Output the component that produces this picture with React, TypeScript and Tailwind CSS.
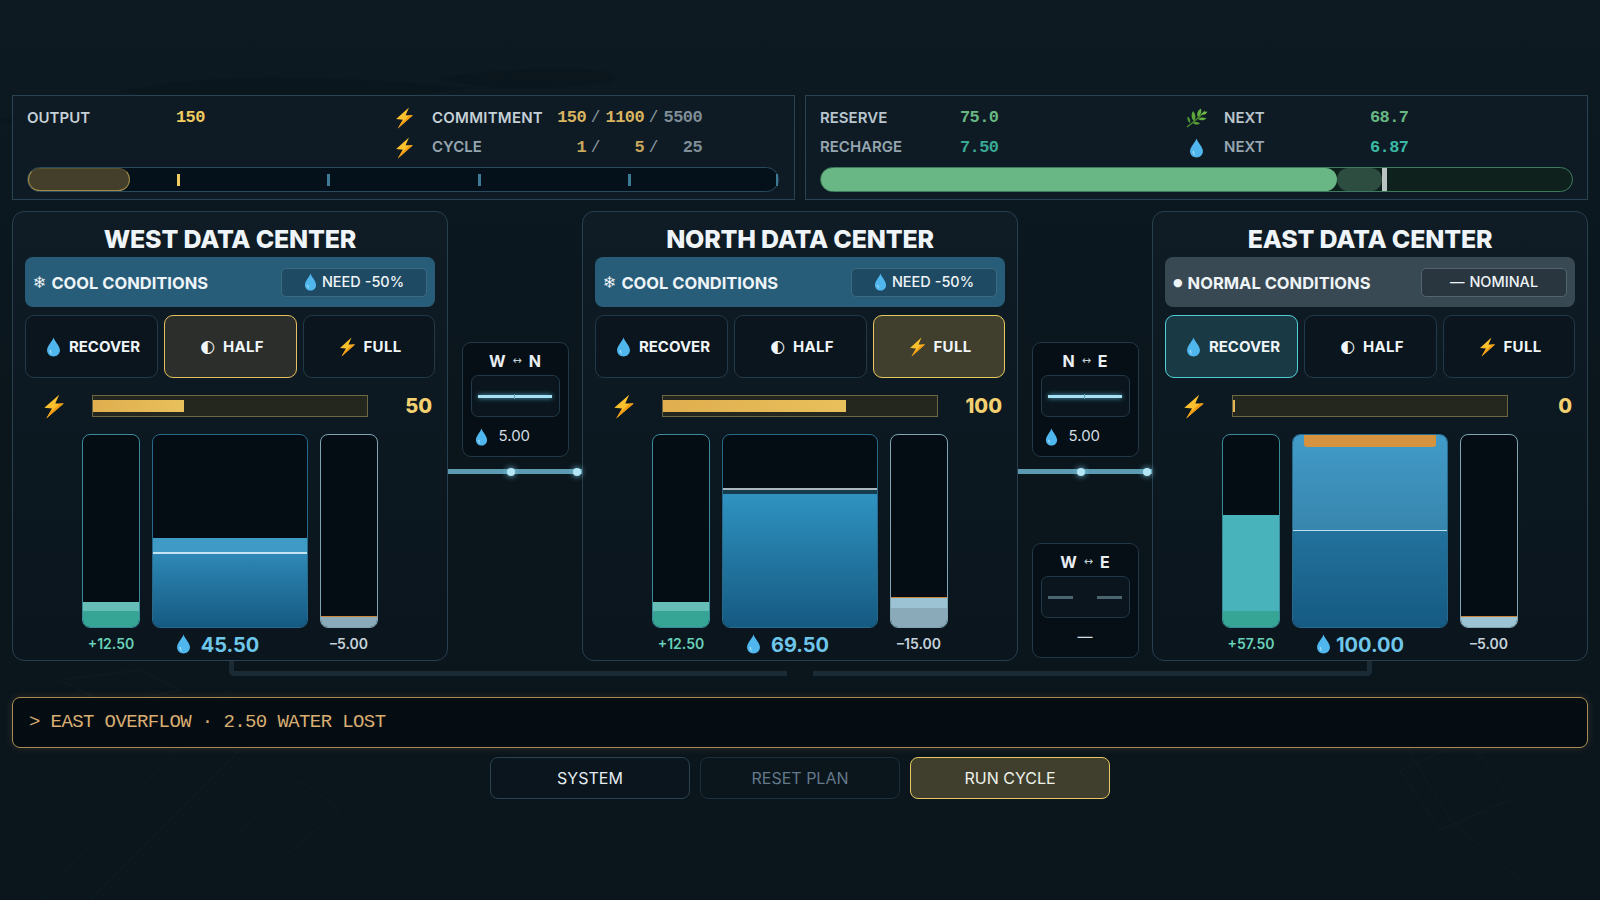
import React from "react";

const Bolt = ({ className = "w-[19px] h-[22px]" }: { className?: string }) => (
  <svg viewBox="0 0 17 20" className={className} preserveAspectRatio="none">
    <path d="M12.5 0.5 L1 11 L7 11.5 L2.5 19.5 L16 7.5 L9.5 7.5 Z" fill="#fbc02d" />
    <path d="M7 11.5 L2.5 19.5 L16 7.5 L13 7.5 L6.5 14 Z" fill="#f39c12" />
  </svg>
);

const Drop = ({ className = "w-[15px] h-[20px]" }: { className?: string }) => (
  <svg viewBox="0 0 14 19" className={className} preserveAspectRatio="none">
    <path d="M7 0.5 C6 4 1 8.5 1 12.6 C1 16 3.7 18.5 7 18.5 C10.3 18.5 13 16 13 12.6 C13 8.5 8 4 7 0.5 Z" fill="#4fb6ee" />
    <path d="M3.4 12.6 C3.4 14.6 4.4 15.9 5.8 16.3 C4.9 15.3 4.6 14 4.8 12.4 Z" fill="#a9e0fb" />
  </svg>
);

const Leaf = () => (
  <svg viewBox="0 0 22 20" className="w-[22px] h-[20px]">
    <path d="M1 19 C6 15 12 11 19 3" stroke="#4e8f2f" strokeWidth="1.2" fill="none" />
    <path d="M8 13 C5 11 5 6 7 3 C10 6 10 10 8 13 Z" fill="#5aa63a" />
    <path d="M12 9 C10 6 12 2 15 0.5 C16 4 15 7 12 9 Z" fill="#62ae40" />
    <path d="M15 6.5 C16 4.5 19 3.5 21.5 3.5 C20.5 6 18 7.5 15 6.5 Z" fill="#72bd4b" />
    <path d="M12 11 C14 9 18 9 20.5 10.5 C18 12.5 15 13 12 11 Z" fill="#62ae40" />
    <path d="M7 15 C9 13.5 12 14 14 15.5 C12 17 9 17 7 15 Z" fill="#5aa63a" />
    <path d="M4 15 C2 14 1 11 1.5 8.5 C4 10 5 12.5 4 15 Z" fill="#4e9a34" />
  </svg>
);

const Glyph = ({ children, className = "" }: { children: React.ReactNode; className?: string }) => (
  <span className={"font-['DejaVu_Sans',sans-serif] " + className}>{children}</span>
);

const Num = ({ children, className = "" }: { children: React.ReactNode; className?: string }) => (
  <span className={"font-['Liberation_Mono',monospace] font-bold text-[17px] tracking-[-0.6px] " + className}>{children}</span>
);

const Slash = () => (
  <span className="w-[19px] text-center font-['Liberation_Mono',monospace] text-[16px] font-normal text-[#8b98a1]">/</span>
);

interface Center {
  name: string;
  cond: "cool" | "normal";
  mode: "recover" | "half" | "full";
  power: number;
  powerPct: string;
  leftLight: number;
  leftColor: string;
  leftLabel: string;
  main: React.ReactNode;
  mainLabel: string;
  right: number;
  rightLight: number;
  rightLabel: string;
}

const MainWest = () => (
  <div className="flex h-full flex-col justify-end">
    <div className="h-[14px] bg-[#409ac6]" />
    <div className="h-[2px] bg-[#c4e4f2]" />
    <div className="h-[73px] bg-gradient-to-b from-[#2e88b6] to-[#155a82]" />
  </div>
);

const MainNorth = () => (
  <div className="flex h-full flex-col justify-end">
    <div className="h-[2px] bg-[#a9b8be]" />
    <div className="h-[4px] bg-[#173c4e]" />
    <div className="h-[133px] bg-gradient-to-b from-[#2f93c1] to-[#155a82]" />
  </div>
);

const MainEast = () => (
  <div className="relative flex h-full flex-col justify-end">
    <div className="absolute left-[11px] right-[11px] top-0 h-[12px] rounded-b-[3px] bg-[#d5933f]" />
    <div className="h-[95px] bg-gradient-to-b from-[#419bc8] to-[#3886ae]" />
    <div className="h-[1px] bg-[#bfe0ee]" />
    <div className="flex-1 bg-gradient-to-b from-[#22729d] to-[#155a82]" />
  </div>
);

const centers: Center[] = [
  {
    name: "WEST DATA CENTER",
    cond: "cool",
    mode: "half",
    power: 50,
    powerPct: "33.3%",
    leftLight: 9,
    leftColor: "bg-[#66bfb7]",
    leftLabel: "+12.50",
    main: <MainWest />,
    mainLabel: "45.50",
    right: 11,
    rightLight: 0,
    rightLabel: "–5.00",
  },
  {
    name: "NORTH DATA CENTER",
    cond: "cool",
    mode: "full",
    power: 100,
    powerPct: "66.7%",
    leftLight: 9,
    leftColor: "bg-[#66bfb7]",
    leftLabel: "+12.50",
    main: <MainNorth />,
    mainLabel: "69.50",
    right: 30,
    rightLight: 10,
    rightLabel: "–15.00",
  },
  {
    name: "EAST DATA CENTER",
    cond: "normal",
    mode: "recover",
    power: 0,
    powerPct: "0.8%",
    leftLight: 96,
    leftColor: "bg-[#49b3bb]",
    leftLabel: "+57.50",
    main: <MainEast />,
    mainLabel: "100.00",
    right: 11,
    rightLight: 10,
    rightLabel: "–5.00",
  },
];

const modeBase = "flex h-[63px] flex-1 items-center justify-center gap-[8px] rounded-[9px] border text-[15px] font-bold text-[#f0f5f8]";

const ModeButtons = ({ mode }: { mode: Center["mode"] }) => (
  <div className="mt-[8px] flex gap-[6px]">
    <div className={modeBase + " pl-[3px] pt-[1px]" + (mode === "recover" ? " border-[#4fd0d8] bg-[#193a45]" : " border-[#233949] bg-[#0a151d]")}>
      <Drop className="w-[15px] h-[20px]" />
      <span>RECOVER</span>
    </div>
    <div className={modeBase + " pl-[3px] pt-[1px]" + (mode === "half" ? " border-[#e6c05c] bg-[#2b2e2a]" : " border-[#233949] bg-[#0a151d]")}>
      <Glyph className="text-[17px] font-normal">◐</Glyph>
      <span className="tracking-[0.3px]">HALF</span>
    </div>
    <div className={modeBase + " pl-[2px] pt-[1px]" + (mode === "full" ? " border-[#e8c860] bg-[#403f2e]" : " border-[#233949] bg-[#0a151d]")}>
      <Bolt className="w-[17px] h-[20px]" />
      <span className="tracking-[0.3px]">FULL</span>
    </div>
  </div>
);

const CenterPanel = ({ c }: { c: Center }) => (
  <div className="h-[450px] rounded-[12px] border border-[#293f4e] bg-gradient-to-b from-[#0f1c25] to-[#0a151d] px-[12px]">
    <div className="flex h-[45px] items-center justify-center pt-[10px] text-[25px] font-extrabold tracking-[-0.2px] text-[#eef4f7]">
      {c.name}
    </div>
    <div className={"flex h-[50px] items-center justify-between rounded-[8px] pl-[8px] pr-[8px] " + (c.cond === "cool" ? "bg-[#285d7a]" : "bg-[#394953]")}>
      <div className="flex items-center gap-[5px] pt-[2px] text-[16.5px] font-bold text-[#eef4f7]">
        <Glyph className={c.cond === "cool" ? "text-[16px]" : "text-[11px]"}>{c.cond === "cool" ? "❄" : "●"}</Glyph>
        <span>{c.cond === "cool" ? "COOL CONDITIONS" : "NORMAL CONDITIONS"}</span>
      </div>
      <div className={"flex h-[29px] w-[146px] items-center justify-center gap-[5px] rounded-[5px] border text-[14.5px] font-medium text-[#eef4f7] " + (c.cond === "cool" ? "border-[#3c6a80] bg-[#1f4a63]" : "border-[#54646d] bg-[#29363f]")}>
        {c.cond === "cool" ? <Drop className="w-[13px] h-[18px]" /> : <span>—</span>}
        <span>{c.cond === "cool" ? "NEED -50%" : "NOMINAL"}</span>
      </div>
    </div>
    <ModeButtons mode={c.mode} />
    <div className="mt-[17px] flex h-[22px] items-center">
      <div className="flex w-[67px] justify-start pl-[18px]">
        <Bolt className="w-[22px] h-[25px]" />
      </div>
      <div className="h-[22px] w-[276px] border border-[#6d6644] bg-[#23271e] py-[4px]">
        <div className="h-full bg-gradient-to-r from-[#e0ae4e] to-[#e8c05c]" style={{ width: c.powerPct }} />
      </div>
      <div className="flex-1 pr-[3px] text-right text-[20px] font-extrabold text-[#f3d070]">{c.power}</div>
    </div>
    <div className="mt-[17px] flex justify-center gap-[12px]">
      <div className="flex h-[194px] w-[58px] flex-col justify-end overflow-hidden rounded-[8px] border border-[#3a8a9a] bg-[#040d13]">
        <div className={c.leftColor} style={{ height: c.leftLight }} />
        <div className="h-[16px] bg-[#37a595]" />
      </div>
      <div className="h-[194px] w-[156px] overflow-hidden rounded-[8px] border border-[#28688a] bg-[#040d13]">
        {c.main}
      </div>
      <div className="flex h-[194px] w-[58px] flex-col justify-end overflow-hidden rounded-[8px] border border-[#7fa5b5] bg-[#040d13]">
        <div className="h-[1px] bg-[#c9843a]" />
        {c.rightLight > 0 && <div className="bg-[#9cc3d3]" style={{ height: c.rightLight }} />}
        {c.right - c.rightLight > 1 && <div className="bg-[#8aaaba]" style={{ height: c.right - c.rightLight - 1 }} />}
      </div>
    </div>
    <div className="mt-[5px] flex justify-center gap-[12px]">
      <div className="w-[58px] text-center text-[14px] font-semibold leading-[22px] text-[#68d0b8]">{c.leftLabel}</div>
      <div className="relative w-[156px] pt-[1px] text-center text-[20px] font-bold leading-[22px] text-[#6ec6ea]">
        <Drop className="absolute left-[24px] top-[1px] w-[15px] h-[20px]" />
        {c.mainLabel}
      </div>
      <div className="w-[58px] whitespace-nowrap text-center text-[14px] font-semibold leading-[22px] text-[#c5d2da]">{c.rightLabel}</div>
    </div>
  </div>
);

const Bridge = ({ label, value, active }: { label: [string, string]; value: string; active: boolean }) => (
  <div className="mx-auto h-[115px] w-[107px] rounded-[9px] border border-[#223847] bg-[#060f15]">
    <div className="flex h-[32px] items-center justify-center gap-[7px] pt-[4px] text-[16px] font-bold text-[#e8eef2]">
      <span>{label[0]}</span>
      <Glyph className="text-[11px] font-normal text-[#c3cfd6]">↔</Glyph>
      <span>{label[1]}</span>
    </div>
    <div className="mx-[8px] flex h-[42px] items-center justify-center rounded-[7px] border border-[#223847] bg-[#0a151d]">
      {active ? (
        <div className="relative h-[3px] w-[74px] bg-[#a6e0f5] shadow-[0_0_5px_#5fb8d8]">
          <div className="absolute left-[36px] top-[-1px] h-[5px] w-[1px] bg-[#5f9fb5]" />
        </div>
      ) : (
        <div className="flex w-[74px] justify-between">
          <div className="h-[3px] w-[25px] bg-[#4d6570]" />
          <div className="h-[3px] w-[25px] bg-[#4d6570]" />
        </div>
      )}
    </div>
    <div className="flex h-[39px] items-center text-[15px] text-[#d3dde3]">
      {active ? (
        <div className="flex items-center gap-[11px] pl-[12px]">
          <Drop className="w-[13px] h-[18px]" />
          <span>{value}</span>
        </div>
      ) : (
        <span className="w-full text-center">{value}</span>
      )}
    </div>
  </div>
);

const Connector = ({ first }: { first: number }) => (
  <div className="relative mt-[12px] h-[5px] bg-[#5b9ab0]">
    <div className="absolute top-[-1.5px] h-[8px] w-[8px] rounded-full bg-[#b4e6f5] shadow-[0_0_6px_#7fd0ea]" style={{ left: first }} />
    <div className="absolute right-[1px] top-[-1.5px] h-[8px] w-[8px] rounded-full bg-[#b4e6f5] shadow-[0_0_6px_#7fd0ea]" />
  </div>
);

const Background = () => (
  <svg className="absolute inset-0 h-[900px] w-[1600px]" viewBox="0 0 1600 900">
    <g fill="#0a151b" opacity="0.55">
      <path d="M120 92 C220 70 330 76 470 88 C360 104 230 104 120 92 Z" />
      <path d="M440 78 C560 60 640 70 610 82 C540 92 480 90 440 78 Z" />
      <path d="M360 140 C480 106 620 104 800 130 C760 150 460 150 360 140 Z" />
      <path d="M0 120 C80 104 200 108 300 135 C220 150 60 150 0 120 Z" />
    </g>
    <g stroke="#12212a" strokeWidth="1" fill="none" opacity="0.6">
      <path d="M40 900 L230 690 M90 900 L290 700" />
      <path d="M240 830 L300 780 L340 810 L280 860 Z" />
      <path d="M1380 700 L1450 820 L1520 880" />
      <path d="M1400 770 L1470 740 L1510 800 L1440 830 Z" />
      <path d="M60 680 L140 670 L180 690 L110 705 Z" />
    </g>
  </svg>
);

export default function App() {
  return (
    <div className="relative h-[900px] overflow-hidden bg-gradient-to-b from-[#0d1a21] via-[#0a151c] to-[#0a151c] font-['Inter',sans-serif]">
      <Background />
      <div className="relative px-[12px] pt-[95px]">
        {/* top status panels */}
        <div className="flex gap-[10px]">
          <div className="h-[105px] flex-1 border border-[#2a4352] bg-[#0e1b24] px-[14px] pt-[7px]">
            <div className="flex h-[30px] items-center text-[15px] font-semibold text-[#c5d0d7]">
              <span className="w-[149px]">OUTPUT</span>
              <Num className="w-[216px] text-[#f0cc60]">150</Num>
              <span className="w-[40px] pl-[3px]"><Bolt /></span>
              <span className="w-[125px] tracking-[0.25px]">COMMITMENT</span>
              <Num className="w-[29px] text-right text-[#dab561]">150</Num>
              <Slash />
              <Num className="w-[39px] text-right text-[#dab561]">1100</Num>
              <Slash />
              <Num className="w-[39px] text-right text-[#7f8d97]">5500</Num>
            </div>
            <div className="flex h-[29px] items-center text-[15px] font-semibold text-[#96a6b0]">
              <span className="w-[365px]" />
              <span className="w-[40px] pl-[3px]"><Bolt /></span>
              <span className="w-[125px]">CYCLE</span>
              <Num className="w-[29px] text-right text-[#c9a85c]">1</Num>
              <Slash />
              <Num className="w-[39px] text-right text-[#c9a85c]">5</Num>
              <Slash />
              <Num className="w-[39px] text-right text-[#7f8d97]">25</Num>
            </div>
            <div className="relative mt-[5px] h-[25px] w-[752px] rounded-full border border-[#2a4a5e] bg-[#04101a]">
              <div className="h-full w-[102px] rounded-full border border-[#a08a45] border-t-[#5a5230] bg-[#433f2b]" />
              <div className="absolute left-[149px] top-[6px] h-[12px] w-[3px] bg-[#f0cc60]" />
              <div className="absolute left-[299px] top-[6px] h-[12px] w-[3px] bg-[#3d7a96]" />
              <div className="absolute left-[450px] top-[6px] h-[12px] w-[3px] bg-[#3d7a96]" />
              <div className="absolute left-[600px] top-[6px] h-[12px] w-[3px] bg-[#3d7a96]" />
              <div className="absolute right-0 top-[6px] h-[12px] w-[2px] bg-[#3d7a96]" />
            </div>
          </div>
          <div className="h-[105px] flex-1 border border-[#2a4352] bg-[#0e1b24] px-[14px] pt-[7px]">
            <div className="flex h-[30px] items-center text-[15px] font-semibold text-[#b9c6cd]">
              <span className="w-[140px]">RESERVE</span>
              <Num className="w-[225px] text-[#68b783]">75.0</Num>
              <span className="w-[39px] pl-[1px]"><Leaf /></span>
              <span className="w-[146px]">NEXT</span>
              <Num className="text-[#68b783]">68.7</Num>
            </div>
            <div className="flex h-[29px] items-center text-[15px] font-semibold text-[#96a6b0]">
              <span className="w-[140px]">RECHARGE</span>
              <Num className="w-[225px] text-[#39a894]">7.50</Num>
              <span className="w-[39px] pl-[4px]"><Drop /></span>
              <span className="w-[146px]">NEXT</span>
              <Num className="text-[#39b8a4]">6.87</Num>
            </div>
            <div className="relative mt-[5px] flex h-[25px] w-[753px] rounded-full border border-[#3d7a5e] bg-[#0f211d]">
              <div className="h-full w-[516px] rounded-full bg-[#69b784]" />
              <div className="h-full w-[45px] rounded-full bg-[#2d4d41]" />
              <div className="h-full w-[5px] bg-[#b9c4c0]" />
            </div>
          </div>
        </div>

        {/* data centers and bridges */}
        <div className="mt-[11px] grid grid-cols-[436px_134px_436px_134px_436px]">
          <CenterPanel c={centers[0]} />
          <div className="pt-[131px]">
            <Bridge label={["W", "N"]} value="5.00" active />
            <Connector first={59} />
          </div>
          <CenterPanel c={centers[1]} />
          <div className="pt-[131px]">
            <Bridge label={["N", "E"]} value="5.00" active />
            <Connector first={59} />
            <div className="mt-[69px]">
              <Bridge label={["W", "E"]} value="—" active={false} />
            </div>
          </div>
          <CenterPanel c={centers[2]} />
        </div>

        {/* return pipe */}
        <div className="ml-[217px] flex h-[15px]">
          <div className="w-[558px] rounded-bl-[5px] border-b-[5px] border-l-[5px] border-[#1a2b36]" />
          <div className="ml-[26px] w-[559px] rounded-br-[5px] border-b-[5px] border-r-[5px] border-[#1a2b36]" />
        </div>

        <div className="mt-[21px] flex h-[51px] items-center rounded-[8px] border border-[#a98a55] bg-[#050d13] px-[16px] font-['Liberation_Mono',monospace] text-[19px] tracking-[-0.6px] text-[#d9ae72] shadow-[0_0_10px_rgba(169,138,85,0.2)]">
          &gt; EAST OVERFLOW · 2.50 WATER LOST
        </div>

        <div className="mt-[9px] flex justify-center gap-[10px] text-[16px]">
          <div className="flex h-[42px] w-[200px] items-center justify-center rounded-[8px] border border-[#2a4352] bg-[#0a151d] text-[#e4ecf0]">SYSTEM</div>
          <div className="flex h-[42px] w-[200px] items-center justify-center rounded-[8px] border border-[#1d2f3b] bg-[#0a151c] text-[#64798a]">RESET PLAN</div>
          <div className="flex h-[42px] w-[200px] items-center justify-center rounded-[8px] border border-[#e8c860] bg-[#403f2e] text-[#eef1ea]">RUN CYCLE</div>
        </div>
      </div>
    </div>
  );
}
